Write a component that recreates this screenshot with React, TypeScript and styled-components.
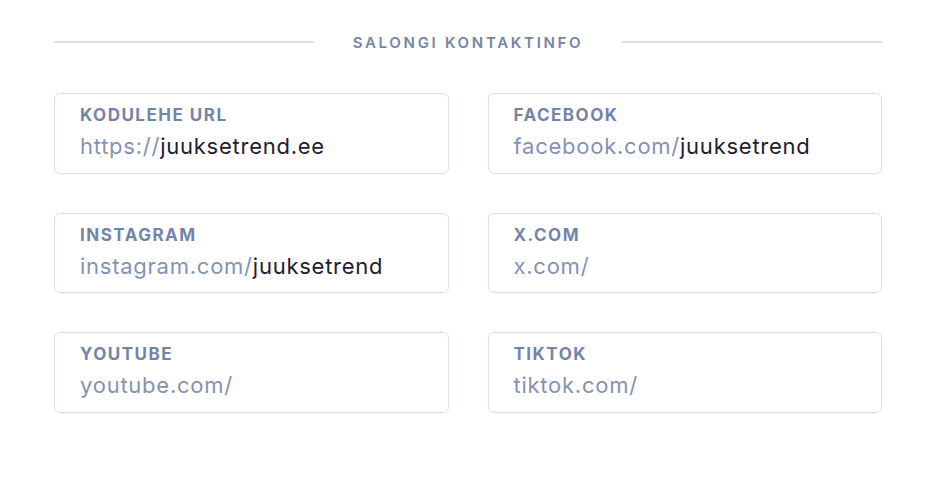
import styled, { createGlobalStyle } from "styled-components";

const GlobalStyle = createGlobalStyle`
    body {
        margin: 0;
        background: #ffffff;
        font-family: Inter, "Noto Sans", sans-serif;
    }
`;

type Field = { label: string; prefix: string; value?: string };

const fields: Field[] = [
    { label: "KODULEHE URL", prefix: "https://", value: "juuksetrend.ee" },
    { label: "FACEBOOK", prefix: "facebook.com/", value: "juuksetrend" },
    { label: "INSTAGRAM", prefix: "instagram.com/", value: "juuksetrend" },
    { label: "X.COM", prefix: "x.com/" },
    { label: "YOUTUBE", prefix: "youtube.com/" },
    { label: "TIKTOK", prefix: "tiktok.com/" },
];

export default function App() {
    return (
        <>
            <GlobalStyle />
            <Page>
                <Heading>
                    <Rule />
                    <HeadingText>SALONGI KONTAKTINFO</HeadingText>
                    <Rule />
                </Heading>
                <Grid>
                    {fields.map((f) => (
                        <Card key={f.label}>
                            <Label>{f.label}</Label>
                            <Value>
                                <Prefix>{f.prefix}</Prefix>
                                {f.value}
                            </Value>
                        </Card>
                    ))}
                </Grid>
            </Page>
        </>
    );
}

const Page = styled.div`
    width: 828px;
    margin-left: 54px;
    padding-top: 31px;
`;

const Heading = styled.div`
    display: flex;
    align-items: center;
    gap: 39px;
    height: 22px;
`;

const Rule = styled.div`
    flex: 1;
    height: 2px;
    background: #dadeea;
`;

const HeadingText = styled.span`
    font-size: 15px;
    font-weight: 600;
    letter-spacing: 2.7px;
    color: #7585a8;
`;

const Grid = styled.div`
    display: grid;
    grid-template-columns: 1fr 1fr;
    column-gap: 39px;
    row-gap: 39px;
    margin-top: 40px;
`;

const Card = styled.div`
    height: 80.5px;
    box-sizing: border-box;
    border: 1px solid #dadeea;
    border-radius: 6px;
    padding: 10px 25px 0;
`;

const Label = styled.div`
    font-size: 17px;
    font-weight: 700;
    line-height: 22px;
    letter-spacing: 1.5px;
    color: #7384a8;
`;

const Value = styled.div`
    margin-top: 5px;
    font-size: 22px;
    line-height: 30px;
    letter-spacing: 0.75px;
    color: #1d2032;
`;

const Prefix = styled.span`
    color: #8393b4;
`;
